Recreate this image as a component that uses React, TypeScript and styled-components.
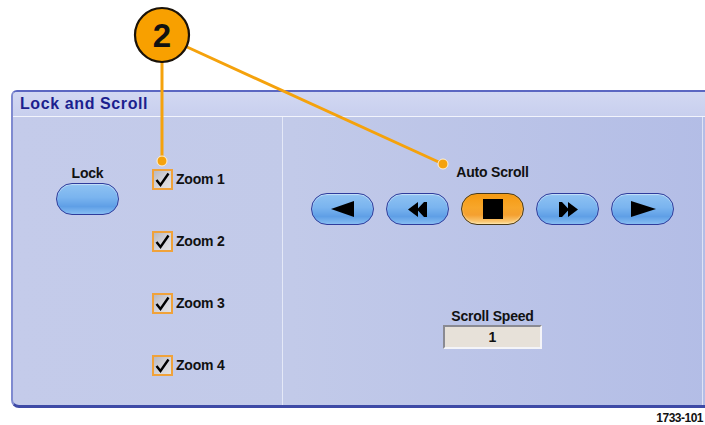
import React from "react";
import styled, { createGlobalStyle, css } from "styled-components";

const Global = createGlobalStyle`
  html, body { margin: 0; padding: 0; background: #ffffff; }
  body { font-family: "Liberation Sans", Arial, sans-serif; }
  * { box-sizing: border-box; }
`;

const Page = styled.div`
  position: relative;
  width: 705px;
  height: 425px;
  overflow: hidden;
  background: #ffffff;
  display: flex;
  flex-direction: column;
`;

const TopSpace = styled.div`
  height: 90px;
  flex: none;
`;

const Panel = styled.section`
  margin-left: 11px;
  width: 700px;
  height: 318px;
  flex: none;
  display: flex;
  flex-direction: column;
  border-top: 2px solid #5b67c2;
  border-left: 2px solid #7f8ad0;
  border-bottom: 3px solid #3e4aa6;
  border-top-left-radius: 6px;
  border-bottom-left-radius: 8px;
  overflow: hidden;
  background: linear-gradient(90deg, #c4cbea 0%, #c2cae9 40%, #b3bde6 100%);
`;

const TitleBar = styled.header`
  height: 25px;
  flex: none;
  display: flex;
  align-items: center;
  padding-left: 7px;
  background: linear-gradient(180deg, #d2d8f2 0%, #c8cfee 100%);
  border-bottom: 1px solid #f2f4fc;
  color: #1c1f8e;
  font-weight: bold;
  font-size: 16px;
  letter-spacing: 0.6px;
`;

const Body = styled.div`
  flex: 1;
  display: flex;
`;

const LeftColumn = styled.div`
  width: 270px;
  flex: none;
  display: flex;
  align-items: flex-start;
  padding: 48px 0 0 43px;
  gap: 33px;
  border-right: 1px solid #e4e8f7;
`;

const RightColumn = styled.div`
  width: 420px;
  flex: none;
  display: flex;
  flex-direction: column;
  align-items: center;
  padding-top: 47px;
  border-right: 1px solid #dfe3f5;
`;

const Label = styled.div`
  font-weight: bold;
  font-size: 14px;
  line-height: 16px;
  color: #111111;
  letter-spacing: -0.2px;
`;

const LockGroup = styled.div`
  display: flex;
  flex-direction: column;
  align-items: center;
  gap: 2px;
`;

const pill = css<{ $active?: boolean }>`
  width: 63px;
  height: 32px;
  border-radius: 16px;
  display: flex;
  align-items: center;
  justify-content: center;
  padding: 0;
  ${(p) =>
    p.$active
      ? css`
          border: 1.5px solid #4a3a18;
          background: linear-gradient(180deg, #f59a12 0%, #f7a62a 45%, #f4a030 70%, #fcd58a 100%);
          box-shadow: inset 0 -1px 2px rgba(255, 240, 200, 0.6);
        `
      : css`
          border: 1.5px solid #2f3c9c;
          background: linear-gradient(180deg, #8fc2f2 0%, #7ab4ef 45%, #5f9fe6 75%, #86bdf2 100%);
          box-shadow: inset 0 1px 1px rgba(255, 255, 255, 0.5);
        `}
`;

const PillButton = styled.button<{ $active?: boolean }>`
  ${pill}
`;

const CheckList = styled.div`
  display: flex;
  flex-direction: column;
  gap: 42px;
  margin-top: 4px;
`;

const CheckRow = styled.label`
  display: flex;
  align-items: center;
  gap: 3px;
  height: 20px;
`;

const Box = styled.span`
  width: 21px;
  height: 21px;
  border: 2px solid #f0a23a;
  background: linear-gradient(135deg, #b9b9c2 0%, #d6d6dc 60%, #e2e2e6 100%);
  display: flex;
  align-items: center;
  justify-content: center;
`;

const Transport = styled.div`
  display: flex;
  gap: 12px;
  margin-top: 13px;
`;

const SpeedGroup = styled.div`
  display: flex;
  flex-direction: column;
  align-items: center;
  gap: 1px;
  margin-top: 83px;
`;

const SpeedField = styled.div`
  width: 99px;
  height: 24px;
  background: #e7e1d9;
  border: 2px solid;
  border-color: #8a8a92 #f4f4f8 #f4f4f8 #8a8a92;
  display: flex;
  align-items: center;
  justify-content: center;
  font-weight: bold;
  font-size: 14px;
  color: #111;
`;

const Footer = styled.div`
  flex: 1;
  display: flex;
  justify-content: flex-end;
  align-items: flex-end;
  padding-right: 2px;
  font-weight: bold;
  font-size: 12px;
  letter-spacing: -0.5px;
  color: #111;
`;

const Overlay = styled.svg`
  position: absolute;
  left: 0;
  top: 0;
  pointer-events: none;
`;

const Check = () => (
  <svg width="15" height="15" viewBox="0 0 15 15">
    <path d="M1.5 8 L5.5 13 L13.5 1.5" fill="none" stroke="#000" strokeWidth="2.4" strokeLinejoin="miter" />
  </svg>
);

type IconKind = "left" | "rew" | "stop" | "ff" | "right";

const TransportIcon = ({ kind }: { kind: IconKind }) => {
  switch (kind) {
    case "left":
      return (
        <svg width="24" height="16" viewBox="0 0 24 16">
          <path d="M0 8 L23 0 L23 16 Z" fill="#000" />
        </svg>
      );
    case "right":
      return (
        <svg width="26" height="16" viewBox="0 0 26 16">
          <path d="M26 8 L1 0 L1 16 Z" fill="#000" />
        </svg>
      );
    case "rew":
      return (
        <svg width="20" height="15" viewBox="0 0 20 15">
          <path d="M0 7.5 L10 0 L10 15 Z M9 7.5 L16 0 L16 15 Z" fill="#000" />
          <rect x="16" y="0" width="3" height="15" fill="#000" />
        </svg>
      );
    case "ff":
      return (
        <svg width="20" height="15" viewBox="0 0 20 15">
          <rect x="1" y="0" width="3" height="15" fill="#000" />
          <path d="M20 7.5 L10 0 L10 15 Z M11 7.5 L4 0 L4 15 Z" fill="#000" />
        </svg>
      );
    case "stop":
      return (
        <svg width="20" height="20" viewBox="0 0 20 20">
          <rect x="0" y="0" width="20" height="20" fill="#000" />
        </svg>
      );
  }
};

const transport: { kind: IconKind; active?: boolean }[] = [
  { kind: "left" },
  { kind: "rew" },
  { kind: "stop", active: true },
  { kind: "ff" },
  { kind: "right" },
];

export default function App() {
  return (
    <>
      <Global />
      <Page>
        <TopSpace />
        <Panel>
          <TitleBar>Lock and Scroll</TitleBar>
          <Body>
            <LeftColumn>
              <LockGroup>
                <Label>Lock</Label>
                <PillButton aria-label="Lock" />
              </LockGroup>
              <CheckList>
                {[1, 2, 3, 4].map((n) => (
                  <CheckRow key={n}>
                    <Box>
                      <Check />
                    </Box>
                    <Label>Zoom {n}</Label>
                  </CheckRow>
                ))}
              </CheckList>
            </LeftColumn>
            <RightColumn>
              <Label>Auto Scroll</Label>
              <Transport>
                {transport.map((t) => (
                  <PillButton key={t.kind} $active={t.active} aria-label={t.kind}>
                    <TransportIcon kind={t.kind} />
                  </PillButton>
                ))}
              </Transport>
              <SpeedGroup>
                <Label>Scroll Speed</Label>
                <SpeedField>1</SpeedField>
              </SpeedGroup>
            </RightColumn>
          </Body>
        </Panel>
        <Footer>1733-101</Footer>
        <Overlay width="705" height="425" viewBox="0 0 705 425">
          <line x1="162" y1="60" x2="162" y2="161" stroke="#f5a20c" strokeWidth="3" />
          <line x1="187" y1="47" x2="443" y2="164" stroke="#f5a20c" strokeWidth="3" />
          <circle cx="162" cy="161" r="5" fill="#f5a20c" stroke="#fff2d8" strokeWidth="1" />
          <circle cx="443" cy="164" r="5" fill="#f5a20c" stroke="#fff2d8" strokeWidth="1" />
          <circle cx="162" cy="35" r="27" fill="#f8a000" stroke="#1a1208" strokeWidth="2.2" />
          <text
            x="162"
            y="47"
            textAnchor="middle"
            fontFamily="Liberation Sans, Arial, sans-serif"
            fontWeight="bold"
            fontSize="33"
            fill="#111"
          >
            2
          </text>
        </Overlay>
      </Page>
    </>
  );
}
